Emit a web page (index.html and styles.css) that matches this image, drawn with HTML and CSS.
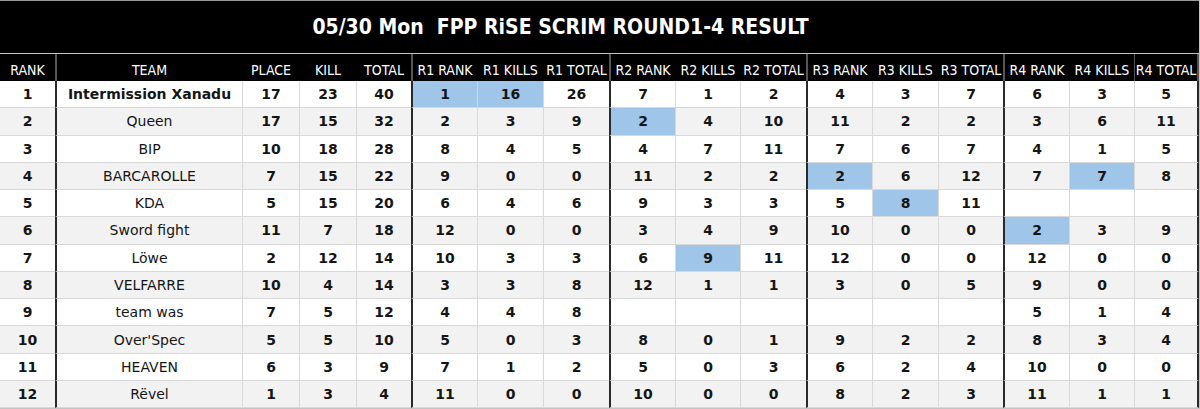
FILE: index.html
```html
<!DOCTYPE html>
<html lang="en">
<head>
<meta charset="utf-8">
<title>05/30 Mon FPP RiSE SCRIM ROUND1-4 RESULT</title>
<link rel="stylesheet" href="styles.css">
</head>
<body>
<div class="sheet">
  <div class="title">05/30 Mon  FPP RiSE SCRIM ROUND1-4 RESULT</div>
  <div class="row head">
    <div class="cell">RANK</div><div class="cell">TEAM</div><div class="cell">PLACE</div><div class="cell">KILL</div><div class="cell">TOTAL</div>
    <div class="cell">R1 RANK</div><div class="cell">R1 KILLS</div><div class="cell">R1 TOTAL</div>
    <div class="cell">R2 RANK</div><div class="cell">R2 KILLS</div><div class="cell">R2 TOTAL</div>
    <div class="cell">R3 RANK</div><div class="cell">R3 KILLS</div><div class="cell">R3 TOTAL</div>
    <div class="cell">R4 RANK</div><div class="cell">R4 KILLS</div><div class="cell">R4 TOTAL</div>
  </div>
  <div class="row odd">
    <div class="cell">1</div><div class="cell team strong">Intermission Xanadu</div><div class="cell">17</div><div class="cell">23</div><div class="cell">40</div>
    <div class="cell hi">1</div><div class="cell hi">16</div><div class="cell">26</div>
    <div class="cell">7</div><div class="cell">1</div><div class="cell">2</div>
    <div class="cell">4</div><div class="cell">3</div><div class="cell">7</div>
    <div class="cell">6</div><div class="cell">3</div><div class="cell">5</div>
  </div>
  <div class="row even">
    <div class="cell">2</div><div class="cell team">Queen</div><div class="cell">17</div><div class="cell">15</div><div class="cell">32</div>
    <div class="cell">2</div><div class="cell">3</div><div class="cell">9</div>
    <div class="cell hi">2</div><div class="cell">4</div><div class="cell">10</div>
    <div class="cell">11</div><div class="cell">2</div><div class="cell">2</div>
    <div class="cell">3</div><div class="cell">6</div><div class="cell">11</div>
  </div>
  <div class="row odd">
    <div class="cell">3</div><div class="cell team">BIP</div><div class="cell">10</div><div class="cell">18</div><div class="cell">28</div>
    <div class="cell">8</div><div class="cell">4</div><div class="cell">5</div>
    <div class="cell">4</div><div class="cell">7</div><div class="cell">11</div>
    <div class="cell">7</div><div class="cell">6</div><div class="cell">7</div>
    <div class="cell">4</div><div class="cell">1</div><div class="cell">5</div>
  </div>
  <div class="row even">
    <div class="cell">4</div><div class="cell team">BARCAROLLE</div><div class="cell">7</div><div class="cell">15</div><div class="cell">22</div>
    <div class="cell">9</div><div class="cell">0</div><div class="cell">0</div>
    <div class="cell">11</div><div class="cell">2</div><div class="cell">2</div>
    <div class="cell hi">2</div><div class="cell">6</div><div class="cell">12</div>
    <div class="cell">7</div><div class="cell hi">7</div><div class="cell">8</div>
  </div>
  <div class="row odd">
    <div class="cell">5</div><div class="cell team">KDA</div><div class="cell">5</div><div class="cell">15</div><div class="cell">20</div>
    <div class="cell">6</div><div class="cell">4</div><div class="cell">6</div>
    <div class="cell">9</div><div class="cell">3</div><div class="cell">3</div>
    <div class="cell">5</div><div class="cell hi">8</div><div class="cell">11</div>
    <div class="cell"></div><div class="cell"></div><div class="cell"></div>
  </div>
  <div class="row even">
    <div class="cell">6</div><div class="cell team">Sword fight</div><div class="cell">11</div><div class="cell">7</div><div class="cell">18</div>
    <div class="cell">12</div><div class="cell">0</div><div class="cell">0</div>
    <div class="cell">3</div><div class="cell">4</div><div class="cell">9</div>
    <div class="cell">10</div><div class="cell">0</div><div class="cell">0</div>
    <div class="cell hi">2</div><div class="cell">3</div><div class="cell">9</div>
  </div>
  <div class="row odd">
    <div class="cell">7</div><div class="cell team">Löwe</div><div class="cell">2</div><div class="cell">12</div><div class="cell">14</div>
    <div class="cell">10</div><div class="cell">3</div><div class="cell">3</div>
    <div class="cell">6</div><div class="cell hi">9</div><div class="cell">11</div>
    <div class="cell">12</div><div class="cell">0</div><div class="cell">0</div>
    <div class="cell">12</div><div class="cell">0</div><div class="cell">0</div>
  </div>
  <div class="row even">
    <div class="cell">8</div><div class="cell team">VELFARRE</div><div class="cell">10</div><div class="cell">4</div><div class="cell">14</div>
    <div class="cell">3</div><div class="cell">3</div><div class="cell">8</div>
    <div class="cell">12</div><div class="cell">1</div><div class="cell">1</div>
    <div class="cell">3</div><div class="cell">0</div><div class="cell">5</div>
    <div class="cell">9</div><div class="cell">0</div><div class="cell">0</div>
  </div>
  <div class="row odd">
    <div class="cell">9</div><div class="cell team">team was</div><div class="cell">7</div><div class="cell">5</div><div class="cell">12</div>
    <div class="cell">4</div><div class="cell">4</div><div class="cell">8</div>
    <div class="cell"></div><div class="cell"></div><div class="cell"></div>
    <div class="cell"></div><div class="cell"></div><div class="cell"></div>
    <div class="cell">5</div><div class="cell">1</div><div class="cell">4</div>
  </div>
  <div class="row even">
    <div class="cell">10</div><div class="cell team">Over'Spec</div><div class="cell">5</div><div class="cell">5</div><div class="cell">10</div>
    <div class="cell">5</div><div class="cell">0</div><div class="cell">3</div>
    <div class="cell">8</div><div class="cell">0</div><div class="cell">1</div>
    <div class="cell">9</div><div class="cell">2</div><div class="cell">2</div>
    <div class="cell">8</div><div class="cell">3</div><div class="cell">4</div>
  </div>
  <div class="row odd">
    <div class="cell">11</div><div class="cell team">HEAVEN</div><div class="cell">6</div><div class="cell">3</div><div class="cell">9</div>
    <div class="cell">7</div><div class="cell">1</div><div class="cell">2</div>
    <div class="cell">5</div><div class="cell">0</div><div class="cell">3</div>
    <div class="cell">6</div><div class="cell">2</div><div class="cell">4</div>
    <div class="cell">10</div><div class="cell">0</div><div class="cell">0</div>
  </div>
  <div class="row even">
    <div class="cell">12</div><div class="cell team">Rëvel</div><div class="cell">1</div><div class="cell">3</div><div class="cell">4</div>
    <div class="cell">11</div><div class="cell">0</div><div class="cell">0</div>
    <div class="cell">10</div><div class="cell">0</div><div class="cell">0</div>
    <div class="cell">8</div><div class="cell">2</div><div class="cell">3</div>
    <div class="cell">11</div><div class="cell">1</div><div class="cell">1</div>
  </div>
</div>
</body>
</html>
```
FILE: styles.css
```css
html, body {
  margin: 0;
  padding: 0;
}
body {
  background: #c4c4c4;
  font-family: "DejaVu Sans", Verdana, sans-serif;
  color: #151515;
}
.sheet {
  width: 1199px;
  border-top: 1px solid #9a9a9a;
  background: #000;
}
.title {
  height: 53px;
  box-sizing: border-box;
  border-bottom: 1px solid #c2c2c2;
  padding-right: 78px;
  display: flex;
  align-items: center;
  justify-content: center;
  color: #fff;
  font-family: "DejaVu Sans Condensed", "DejaVu Sans", sans-serif;
  font-stretch: condensed;
  font-weight: bold;
  font-size: 21px;
  white-space: pre;
}
.row {
  display: grid;
  grid-template-columns: 55px 187px 57px 57px 55px 66px 66px 66px 66px 65px 66px 66px 66px 65px 66px 65px 65px;
  height: 27.27px;
}
.cell {
  box-sizing: border-box;
  display: flex;
  align-items: center;
  justify-content: center;
  border-left: 1px solid #d8d8d8;
  border-bottom: 1px solid #d8d8d8;
  font-size: 14px;
  font-weight: bold;
  white-space: nowrap;
}
.row > .cell:first-child {
  border-left: none;
}
.row > .cell:nth-child(2),
.row > .cell:nth-child(6),
.row > .cell:nth-child(9),
.row > .cell:nth-child(12),
.row > .cell:nth-child(15) {
  border-left: 2px solid #2a2a2a;
}
.row > .cell:last-child {
  border-right: 2px solid #2a2a2a;
}
.odd {
  background: #fff;
}
.even {
  background: #f2f2f2;
}
.team {
  font-weight: normal;
}
.team.strong {
  font-weight: bold;
}
.hi {
  background: #9fc5e8;
}
.head {
  height: 27px;
  background: #000;
  color: #fff;
}
.head > .cell {
  border-bottom: none;
  border-left-color: #000;
  padding-top: 4px;
  font-family: "DejaVu Sans Condensed", "DejaVu Sans", sans-serif;
  font-stretch: condensed;
  font-weight: normal;
  font-size: 14px;
}
.head > .cell:nth-child(2),
.head > .cell:nth-child(6),
.head > .cell:nth-child(9),
.head > .cell:nth-child(12),
.head > .cell:nth-child(15),
.head > .cell:last-child {
  border-color: #555;
  border-bottom: none;
}
.head > .cell:first-child {
  border-left: none;
}
```
